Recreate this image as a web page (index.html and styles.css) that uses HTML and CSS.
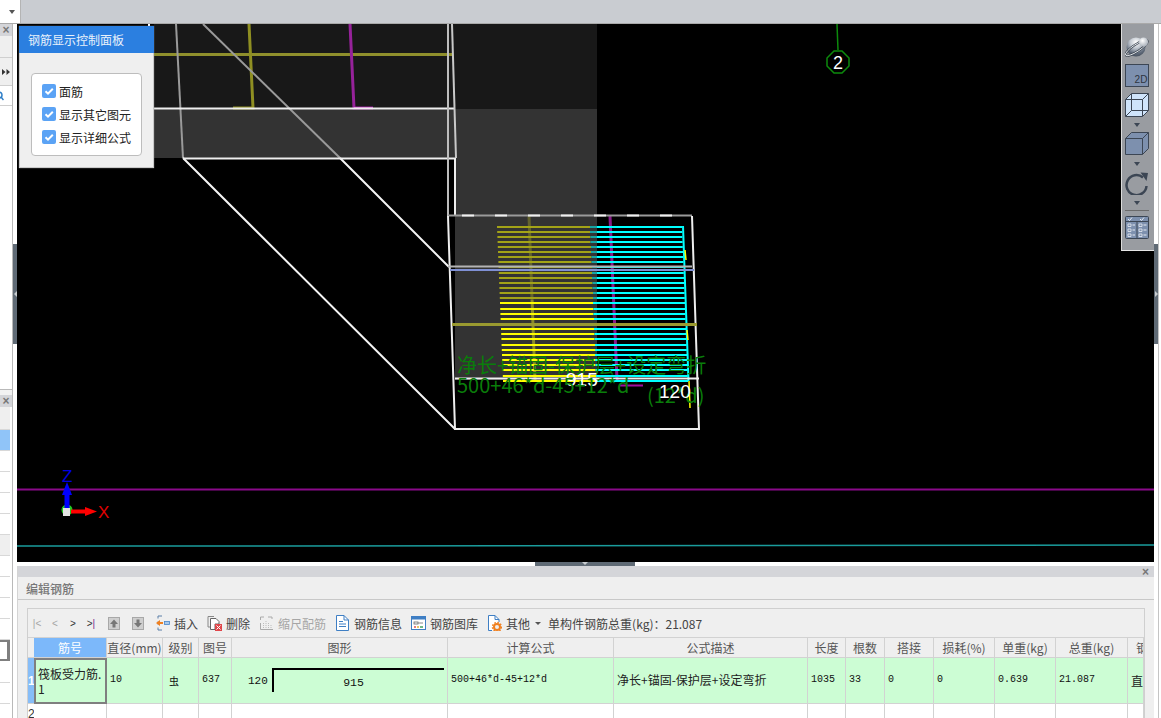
FILE: index.html
```html
<!DOCTYPE html>
<html lang="zh-CN">
<head>
<meta charset="utf-8">
<title>编辑钢筋</title>
<link rel="stylesheet" href="styles.css">
</head>
<body>
<header class="topbar">
  <div class="combo"><span class="caret"></span></div>
</header>
<div class="main">
  <aside class="side">
    <div class="side-head"><span class="close">×</span></div>
    <div class="side-row grey h22"></div>
    <div class="side-row grey h28">
      <svg class="more" width="8" height="6" viewBox="0 0 8 6"><path d="M0 0L3.500 3L0 6ZM4.500 0L8 3L4.500 6Z" fill="#333"/></svg>
    </div>
    <div class="side-row h20">
      <svg class="search" width="4" height="10" viewBox="0 0 4 10"><circle cx="-1" cy="4" r="3" fill="none" stroke="#2f7fc8" stroke-width="1.5"/><path d="M1 6l2.500 3" stroke="#2f7fc8" stroke-width="1.500"/></svg>
    </div>
    <div class="side-fill"></div>
    <div class="side-gap"></div>
    <div class="side-head"><span class="close">×</span></div>
    <div class="side-list">
      <div class="item grey h23"></div>
      <div class="item selected h21"></div>
      <div class="item h21"></div>
      <div class="item h21"></div>
      <div class="item h21"></div>
      <div class="item h21"></div>
      <div class="item grey h21"></div>
      <div class="item h21"></div>
      <div class="item h21"></div>
      <div class="item h21"></div>
      <div class="item h21"></div>
      <div class="item boxed h21"></div>
      <div class="item h22"></div>
      <div class="item h21"></div>
      <div class="item h15"></div>
    </div>
  </aside>
  <div class="split"><div class="handle"><span class="arrow-left"></span></div></div>
  <div class="center">
    <section class="viewport">
      <svg class="cad" width="1137" height="538" viewBox="17 24 1137 538">
        <rect x="154" y="24" width="443" height="85" fill="#181818"/>
        <rect x="154" y="109" width="443" height="49" fill="#333"/>
        <rect x="455" y="158" width="142" height="222" fill="#333"/>
        <path d="M149 24V26" stroke="#fff" stroke-width="2" fill="none"/>

        <path d="M154 54.500H452" stroke="#8f8f2c" stroke-width="3" fill="none"/>
        <path d="M249 24L253 108H233" stroke="#8f8f22" stroke-width="3" fill="none"/>
        <path d="M233 108.500H253" stroke="#efefc8" stroke-width="1" fill="none"/>
        <path d="M350 24L354 108H373" stroke="#96229a" stroke-width="3" fill="none"/>
        <path d="M354 108H373" stroke="#e060e0" stroke-width="1.500" fill="none"/>
        <path d="M176 24L183 158" stroke="#9a9a9a" stroke-width="2" fill="none"/>
        <path d="M203 24L340 158" stroke="#9a9a9a" stroke-width="2" fill="none"/>
        <path d="M340 158L449 267M183 158L455 429" stroke="#f4f4f4" stroke-width="2" fill="none"/>
        <path d="M154 108.500H455M183 158.500H455" stroke="#eee" stroke-width="2" fill="none"/>
        <path d="M448 24V216" stroke="#bdbdbd" stroke-width="2" fill="none"/>
        <path d="M452 24L456 158" stroke="#c8c8c8" stroke-width="2" fill="none"/>
        <path d="M455 158V216" stroke="#eee" stroke-width="2" fill="none"/>

        <path d="M529 216L535 380" stroke="#8a8a2a" stroke-width="3" fill="none"/>
        <path d="M610 216L617 380" stroke="#8a1a8a" stroke-width="3" fill="none"/>

        <path class="rebar-y" d="M497 227H590M497.200 232H590M497.400 237H590.500M497.600 242H590.500M497.800 247H591M498 252H591M498.200 257H591.500M498.400 262H591.500M498.600 267H592M498.800 273H592M499 278H592M499.200 283H592.500M499.400 288H592.500M499.600 293H593M499.800 298H593M500 303H593M500.200 309H593.500M500.400 314H593.500M500.600 319H594M500.800 324H594M501 329H594M501.200 334H594.500M501.400 339H594.500M501.600 345H595M501.800 350H595M502 355H595M502.200 360H595M502.400 365H595.500M502.600 370H595.500M502.800 376H596M503 381H596"/>
        <path class="rebar-c" d="M590 227H682M590 232H682.200M590.500 237H682.400M590.500 242H682.600M591 247H682.800M591 252H683M591.500 257H683.200M591.500 262H683.400M592 267H683.600M592 273H683.800M592 278H684M592.500 283H684.200M592.500 288H684.400M593 293H684.600M593 298H684.800M593 303H685M593.500 309H685.200M593.500 314H685.400M594 319H685.600M594 324H685.800M594 329H686M594.500 334H686.200M594.500 339H686.400M595 345H686.600M595 350H686.800M595 355H687M595 360H687.200M595.500 365H687.400M595.500 370H687.600M596 376H687.800M596 381H688"/>
        <path class="rebar-c" d="M683 226L688.500 381"/>
        <rect class="dim" x="455" y="216" width="142" height="84"/>
        <path d="M685 250L686 260M687 330L688 340M689 381L690 408" stroke="#ffff00" stroke-width="1.500" fill="none"/>
        <path d="M620 385.500H643" stroke="#a010a0" stroke-width="2" fill="none"/>

        <path d="M448 215.500H692" stroke="#9a9a9a" stroke-width="2" fill="none"/>
        <path d="M462 215.500H692" stroke="#f0f0f0" stroke-width="2" stroke-dasharray="12 21" fill="none"/>
        <path d="M692 216L699 429H455L448 216" stroke="#eee" stroke-width="2" fill="none"/>
        <path d="M448 266.500H692" stroke="#b4b4b4" stroke-width="2" fill="none"/>
        <path d="M450 270H694" stroke="#7f90d4" stroke-width="2" fill="none"/>
        <path d="M452 324.500H697" stroke="#9a9a30" stroke-width="3" fill="none"/>
        <path d="M455 378.500H699" stroke="#f0f0f0" stroke-width="2" fill="none"/>

        <text class="cad-green" x="457" y="373">净长+锚固-保护层+设定弯折</text>
        <text class="cad-white" x="566" y="386">915</text>
        <text class="cad-green" x="457" y="393">500+46*d-45+12*d</text>
        <text class="cad-green" x="647" y="403">(12*d)</text>
        <text class="cad-white" x="659" y="398">120</text>

        <path d="M837 24L838 50" stroke="#0c8a0c" stroke-width="1.500" fill="none"/>
        <polygon points="834,51 842,51 849,58 849,66 842,73 834,73 827,66 827,58" fill="#000" stroke="#0c8a0c" stroke-width="1.500"/>
        <text class="grid-num" x="838" y="69">2</text>

        <path d="M17 489.500H1154" stroke="#8a0a8a" stroke-width="2" fill="none"/>
        <path d="M17 546H280L1154 545" stroke="#1a9c9c" stroke-width="1.500" fill="none"/>

        <circle cx="67" cy="510" r="5.500" fill="#22cc22"/>
        <path d="M67 508V492" stroke="#0000ff" stroke-width="5" fill="none"/>
        <polygon points="67,482 62,495 72,495" fill="#0000ff"/>
        <path d="M71 511.500H86" stroke="#ff0000" stroke-width="4" fill="none"/>
        <polygon points="97,511.500 85,507 85,516" fill="#ff0000"/>
        <rect x="63" y="508" width="7" height="8" fill="#e4e4e4"/>
        <text class="axis-z" x="62" y="482">Z</text>
        <text class="axis-x" x="98" y="518">X</text>
      </svg>

      <div class="control">
        <div class="control-title">钢筋显示控制面板</div>
        <div class="control-body">
          <div class="control-box">
            <label class="check"><span class="tick"><svg width="14" height="14" viewBox="0 0 14 14"><path d="M3.500 7.200L6 9.600L10.800 4.800" fill="none" stroke="#fff" stroke-width="2"/></svg></span>面筋</label>
            <label class="check"><span class="tick"><svg width="14" height="14" viewBox="0 0 14 14"><path d="M3.500 7.200L6 9.600L10.800 4.800" fill="none" stroke="#fff" stroke-width="2"/></svg></span>显示其它图元</label>
            <label class="check"><span class="tick"><svg width="14" height="14" viewBox="0 0 14 14"><path d="M3.500 7.200L6 9.600L10.800 4.800" fill="none" stroke="#fff" stroke-width="2"/></svg></span>显示详细公式</label>
          </div>
        </div>
      </div>

      <nav class="vtools">
        <svg class="vi-sphere" width="24" height="20" viewBox="0 0 24 20">
          <defs>
            <radialGradient id="ball" cx=".5" cy=".25" r=".85"><stop offset="0" stop-color="#fff"/><stop offset=".35" stop-color="#c4cad2"/><stop offset=".7" stop-color="#5f6a7a"/><stop offset="1" stop-color="#39424e"/></radialGradient>
            <radialGradient id="knob" cx=".4" cy=".35" r=".7"><stop offset="0" stop-color="#fff"/><stop offset="1" stop-color="#a4acb6"/></radialGradient>
          </defs>
          <circle cx="11" cy="10" r="9.500" fill="url(#ball)"/>
          <ellipse cx="11.500" cy="11" rx="13" ry="3.500" transform="rotate(-33 11.500 11)" fill="none" stroke="#39424e" stroke-width="2.200"/>
          <ellipse cx="11.500" cy="11" rx="13" ry="3.500" transform="rotate(-33 11.500 11)" fill="none" stroke="#e4e8ec" stroke-width=".9"/>
          <circle cx="18.500" cy="5" r="4.500" fill="url(#knob)"/>
        </svg>
        <svg class="vi-2d" width="24" height="23" viewBox="0 0 24 23">
          <rect x=".5" y=".5" width="23" height="22" fill="#7d90ae" stroke="#3c4654"/>
          <text class="two-d" x="16" y="19">2D</text>
        </svg>
        <svg class="vi-cube" width="24" height="24" viewBox="0 0 24 24">
          <path d="M.5 6.500L6.500.5H23.500V17.500L17.500 23.500H.5Z" fill="#cfe4fb" stroke="#3c4654"/>
          <path d="M.5 6.500H17.500V23.500M17.500 6.500L23.500.5M6.500.5V17.500H23.500M6.500 17.500L.5 23.500" fill="none" stroke="#3c4654"/>
        </svg>
        <span class="vcaret"></span>
        <svg class="vi-solid" width="24" height="23" viewBox="0 0 24 23">
          <path d="M.5 6.500L6.500.5H23.500V16.500L17.500 22.500H.5Z" fill="#7d90ae" stroke="#3c4654"/>
          <path d="M.5 6.500H17.500V22.500M17.500 6.500L23.500.5" fill="none" stroke="#3c4654"/>
        </svg>
        <span class="vcaret tall"></span>
        <svg class="vi-rot" width="24" height="23" viewBox="0 0 24 23">
          <path d="M18 5.500A10 10 0 1 0 21.500 14" fill="none" stroke="#3c4654" stroke-width="2.500"/>
          <path d="M15.500 0.500L23 1L21.500 9Z" fill="#3c4654"/>
        </svg>
        <span class="vcaret"></span>
        <span class="vline"></span>
        <svg class="vi-grid" width="24" height="23" viewBox="0 0 24 23">
          <rect x=".5" y=".5" width="23" height="22" rx="1" fill="#7d90ae" stroke="#3c4654"/>
          <path d="M.5 5.500H23.500M12 5.500V22.500" stroke="#3c4654" fill="none"/>
          <path d="M3 3l1.500 1.500L7 1.500M15 3l1.500 1.500L19 1.500" stroke="#e8ecf2" fill="none"/>
          <path d="M3 8h3v2.500H3zM3 13h3v2.500H3zM3 18h3v2.500H3zM14 8h3v2.500h-3zM14 13h3v2.500h-3zM14 18h3v2.500h-3z" fill="none" stroke="#e8ecf2" stroke-width=".8"/>
          <path d="M7.500 9h2.500M7.500 14h2.500M7.500 19h2.500M18.500 9h3M18.500 14h3M18.500 19h3" stroke="#e8ecf2"/>
        </svg>
      </nav>
    </section>
    <div class="hsplit"><div class="hhandle"><span class="arrow-down"></span></div></div>
    <section class="panel">
      <div class="panel-head"><span class="close">×</span></div>
      <div class="panel-title">编辑钢筋</div>
      <div class="sheet">
        <div class="toolbar">
          <span class="nav off">|&lt;</span>
          <span class="nav off">&lt;</span>
          <span class="nav">&gt;</span>
          <span class="nav">&gt;<i class="bar">|</i></span>
          <svg class="move up" width="12" height="13" viewBox="0 0 12 13"><rect x=".5" y=".5" width="11" height="12" fill="#cfcfcf" stroke="#a8a8a8"/><path d="M6 2.500L10 7H7.500V10.500H4.500V7H2Z" fill="#777"/></svg>
          <svg class="move down" width="12" height="13" viewBox="0 0 12 13"><rect x=".5" y=".5" width="11" height="12" fill="#cfcfcf" stroke="#a8a8a8"/><path d="M6 10.500L10 6H7.500V2.500H4.500V6H2Z" fill="#777"/></svg>
          <span class="tool">
            <svg width="15" height="16" viewBox="0 0 15 16"><path d="M7 1H3V3.500M3 6.500V9.500M3 12.500V15H7" fill="none" stroke="#5b7fa8"/><path d="M1 8L5 5V7H8V9H5V11Z" fill="#f08020"/><rect x="9.500" y="6.500" width="5" height="3" fill="#a9c9ea" stroke="#4a86c8" stroke-width=".8"/></svg>
            插入
          </span>
          <span class="tool">
            <svg width="15" height="16" viewBox="0 0 15 16"><path d="M1 1.500H7M1 1.500V12H4" fill="none" stroke="#888"/><path d="M3.500 3.500H9L12 6.500V9H8V14.500H3.500Z" fill="#fff" stroke="#666"/><rect x="8" y="9" width="7" height="7" fill="#e0464a"/><path d="M9.500 10.500L13.500 14.500M13.500 10.500L9.500 14.500" stroke="#fff"/></svg>
            删除
          </span>
          <span class="tool off">
            <svg width="15" height="16" viewBox="0 0 15 16"><path d="M1.500 2H5M1.500 2V5M1.500 8V14.500H14M9 2H13M13 2V4" fill="none" stroke="#aaa"/><path d="M4.500 8V14M7 6V14M9.500 8V14M12 10V14" stroke="#bbb" stroke-dasharray="1 1"/></svg>
            缩尺配筋
          </span>
          <span class="tool">
            <svg width="15" height="16" viewBox="0 0 15 16"><path d="M1.500 .5H9L13.500 5V15.500H1.500Z" fill="#fff" stroke="#3f7fc4"/><path d="M9 .5V5H13.500M4 6.500H8M4 9H11M4 11.500H11" fill="none" stroke="#3f7fc4"/></svg>
            钢筋信息
          </span>
          <span class="tool">
            <svg width="15" height="16" viewBox="0 0 15 16"><rect x=".5" y="1.500" width="14" height="13" fill="#fff" stroke="#3f7fc4"/><rect x=".5" y="1.500" width="14" height="3" fill="#3f7fc4"/><rect x="3" y="7" width="4" height="2" fill="none" stroke="#666" stroke-width=".8"/><path d="M7 8H12" stroke="#888"/><path d="M3 12H5" stroke="#e05050" stroke-width="1.500"/><path d="M6 12H8" stroke="#e0b030" stroke-width="1.500"/><path d="M9 12H12" stroke="#40a060" stroke-width="1.500"/></svg>
            钢筋图库
          </span>
          <span class="tool">
            <svg width="15" height="16" viewBox="0 0 15 16"><path d="M5 15.500H1.500V.5H8L12 4.500V7" fill="#fff" stroke="#3f7fc4"/><path d="M8 .5V4.500H12" fill="none" stroke="#3f7fc4"/><circle cx="10" cy="12" r="3" fill="none" stroke="#f08020" stroke-width="2"/><circle cx="10" cy="12" r="4.500" fill="none" stroke="#f08020" stroke-dasharray="1.500 1.500" stroke-width="1.500"/></svg>
            其他
          </span>
          <span class="tool-caret"></span>
          <span class="summary">单构件钢筋总重(kg)：21.087</span>
        </div>
        <table class="grid">
          <colgroup>
            <col class="c-h"><col class="c-no"><col class="c-d"><col class="c-g"><col class="c-f"><col class="c-shape"><col class="c-calc"><col class="c-desc"><col class="c-len"><col class="c-num"><col class="c-lap"><col class="c-loss"><col class="c-unit"><col class="c-total"><col class="c-end">
          </colgroup>
          <thead>
            <tr>
              <th class="rowhead"></th><th class="active">筋号</th><th>直径(mm)</th><th>级别</th><th>图号</th><th>图形</th><th>计算公式</th><th>公式描述</th><th>长度</th><th>根数</th><th>搭接</th><th>损耗(%)</th><th>单重(kg)</th><th>总重(kg)</th><th class="clip">钢筋归类</th>
            </tr>
          </thead>
          <tbody>
            <tr class="on">
              <th class="rowhead sel">1</th>
              <td class="current">筏板受力筋.<br>1</td>
              <td class="mono">10</td>
              <td class="grade">虫</td>
              <td class="mono">637</td>
              <td class="shape-cell">
                <div class="shape"><span class="dim-a">120</span><span class="leg">915</span></div>
              </td>
              <td class="mono">500+46*d-45+12*d</td>
              <td class="desc">净长+锚固-保护层+设定弯折</td>
              <td class="mono">1035</td>
              <td class="mono">33</td>
              <td class="mono">0</td>
              <td class="mono">0</td>
              <td class="mono">0.639</td>
              <td class="mono">21.087</td>
              <td class="clip-cell">直筋</td>
            </tr>
            <tr class="blank">
              <th class="rowhead">2</th>
              <td></td><td></td><td></td><td></td><td></td><td></td><td></td><td></td><td></td><td></td><td></td><td></td><td></td><td></td>
            </tr>
          </tbody>
        </table>
      </div>
    </section>
  </div>
  <div class="split right"><div class="handle"><span class="arrow-right"></span></div></div>
  <div class="edge"></div>
</div>
</body>
</html>
```

FILE: styles.css
```css
* { box-sizing: border-box; }
html, body { margin: 0; height: 718px; overflow: hidden; background: #fff; }
body {
  display: flex;
  flex-direction: column;
  font: 12px "Noto Sans CJK SC", "Liberation Sans", sans-serif;
  color: #333;
}

/* top */
.topbar { height: 24px; flex: none; background: #c9ccd1; border-bottom: 1px solid #a9a9a9; }
.combo { position: relative; width: 21px; height: 23px; background: #fff; border-right: 1px solid #b4b4b4; display: flex; justify-content: flex-end; align-items: center; padding-right: 5px; }
.caret { border: 3px solid transparent; border-top: 4px solid #555; border-bottom: 0; }

.main { flex: 1; display: flex; min-height: 0; }

/* left */
.side { width: 13px; flex: none; display: flex; flex-direction: column; border-right: 1px solid #b9b9b9; overflow: hidden; }
.side-head { height: 12px; flex: none; background: #d4d5d9; display: flex; align-items: center; justify-content: center; }
.close { font: bold 12px/10px "Liberation Sans", sans-serif; color: #777; }
.side-row { flex: none; border-bottom: 1px solid #cfcfcf; display: flex; align-items: center; }
.side-row.grey { background: #efefef; }
.h15 { height: 15px; } .h20 { height: 20px; } .h21 { height: 21px; } .h22 { height: 22px; } .h23 { height: 23px; } .h28 { height: 28px; }
.more { display: block; margin-left: 2px; }
.search { display: block; }
.side-fill { height: 284px; flex: none; border-bottom: 1px solid #b9b9b9; }
.side-gap { height: 5px; flex: none; background: #f2f2f2; }
.side-list { flex: 1; }
.item { width: 10px; border-bottom: 1px solid #d8d8d8; }
.item.grey { background: #efefef; }
.item.selected { background: #90c4f8; }
.item.boxed { border: 2px solid #7f7f7f; border-left: 0; border-right-width: 3px; }

/* splitters */
.split { width: 4px; flex: none; padding-top: 220px; background: #fff; }
.handle { height: 100px; background: #5f6a75; display: flex; align-items: center; justify-content: center; }
.arrow-left { border: 3px solid transparent; border-right: 3px solid #c8ccd0; border-left: 0; }
.arrow-right { border: 3px solid transparent; border-left: 3px solid #c8ccd0; border-right: 0; }
.edge { flex: 1; border-left: 1px solid #c4c4c4; background: #fff; }

.center { width: 1137px; flex: none; display: flex; flex-direction: column; }

/* viewport */
.viewport { position: relative; height: 538px; flex: none; background: #000; overflow: hidden; }
.cad { display: block; }
.rebar-y { fill: none; stroke: #ffff00; stroke-width: 2; }
.rebar-c { fill: none; stroke: #00ffff; stroke-width: 2; }
.dim { fill: #333; fill-opacity: .45; }
.cad-green { font: 20px "Noto Sans CJK SC", "Liberation Sans", sans-serif; fill: #0a7d0a; }
.cad-white { font: 19px "Liberation Sans", sans-serif; fill: #fff; }
.grid-num { font: 18px "Liberation Sans", sans-serif; fill: #fff; text-anchor: middle; }
.axis-z { font: 17px "Liberation Sans", sans-serif; fill: #0000e0; }
.axis-x { font: 17px "Liberation Sans", sans-serif; fill: #e00000; }

/* control panel */
.control { position: absolute; left: 2px; top: 2px; width: 135px; height: 142px; background: #efefef; border: 1px solid #c9c9c9; border-top: 0; box-shadow: 0 0 1px #999; }
.control-title { height: 27px; margin: 0 -1px; background: #2b7fe0; color: #e8f1fb; padding-left: 9px; font-size: 12px; line-height: 27px; }
.control-body { padding: 20px 11px 0 11px; }
.control-box { height: 83px; background: #fff; border: 1px solid #bdbdbd; border-radius: 4px; padding: 10px 0 0 10px; display: flex; flex-direction: column; gap: 9px; }
.check { display: flex; align-items: center; height: 14px; gap: 3px; color: #222; font-size: 12px; white-space: nowrap; }
.tick { width: 14px; height: 14px; border-radius: 2px; background: #5ba3f5; flex: none; }
.tick svg { display: block; }

/* right tools */
.vtools { position: absolute; right: 0; top: 0; width: 33px; height: 227px; background: #999ca1; border-left: 1px solid #dcdcdc; border-bottom: 1px solid #e6e6e6; padding: 13px 0 0 3px; display: flex; flex-direction: column; }
.vtools svg { display: block; flex: none; }
.vi-2d { margin-top: 7px; }
.vi-cube { margin-top: 6px; }
.two-d { font: 10px "Liberation Sans", sans-serif; fill: #2d3540; text-anchor: middle; }
.vcaret { height: 15px; flex: none; width: 24px; display: flex; align-items: center; justify-content: center; }
.vcaret::before { content: ""; border: 3px solid transparent; border-top: 4px solid #3c4654; border-bottom: 0; }
.vcaret.tall { height: 17px; }
.vline { height: 1px; width: 24px; background: #6a6a6a; flex: none; margin-bottom: 5px; }

/* horizontal splitter */
.hsplit { height: 4px; flex: none; background: #fff; display: flex; justify-content: center; }
.hhandle { width: 100px; height: 4px; margin-left: -1px; background: #5f6a75; display: flex; justify-content: center; }
.arrow-down { border: 3px solid transparent; border-top: 3px solid #c8ccd0; border-bottom: 0; }

/* bottom panel */
.panel { flex: 1; background: #efefef; border-left: 1px solid #d4d4d4; min-height: 0; overflow: hidden; }
.panel-head { height: 11px; background: #d4d5d9; display: flex; justify-content: flex-end; align-items: center; padding-right: 5px; }
.panel-title { height: 23px; border-bottom: 1px solid #c8c8c8; color: #777; padding-left: 8px; font-size: 12px; line-height: 23px; font-weight: 500; }
.sheet { margin: 8px 9px 0 9px; border: 1px solid #cfcfcf; border-bottom: 0; height: 120px; background: #efefef; overflow: hidden; }

.toolbar { height: 28px; display: flex; align-items: center; color: #444; white-space: nowrap; }
.nav { width: 18px; text-align: center; font: 10px "Liberation Sans", sans-serif; color: #333; flex: none; }
.nav.off { color: #a6a6a6; }
.bar { font-style: normal; color: #7a2a8a; }
.move { flex: none; }
.move.up { margin-left: 8px; }
.move.down { margin-left: 12px; }
.tool { display: flex; align-items: center; gap: 4px; margin-left: 11px; margin-right: -2px; }
.tool svg { flex: none; }
.tool.off { color: #a6a6a6; }
.tool-caret { margin-left: 7px; border: 3px solid transparent; border-top: 3px solid #555; border-bottom: 0; }
.summary { margin-left: 7px; color: #444; }

.grid { table-layout: fixed; width: 1116px; border-collapse: separate; border-spacing: 0; }
.c-h { width: 6px; } .c-no { width: 73px; } .c-d { width: 56px; } .c-g { width: 36px; } .c-f { width: 33px; }
.c-shape { width: 216px; } .c-calc { width: 166px; } .c-desc { width: 194px; } .c-len { width: 38px; } .c-num { width: 39px; }
.c-lap { width: 49px; } .c-loss { width: 61px; } .c-unit { width: 61px; } .c-total { width: 72px; } .c-end { width: 16px; }

.grid th, .grid td { padding: 0; border-right: 1px solid #d2d2d2; border-bottom: 1px solid #d2d2d2; overflow: hidden; white-space: nowrap; }
.grid thead th { height: 21px; background: #efefef; font-weight: 400; color: #555; text-align: center; border-top: 1px solid #d2d2d2; }
.grid thead th.active { background: #7cb8fa; color: #fff; }
.grid thead th.rowhead { background: #efefef; }
.grid th.clip { text-align: left; padding-left: 8px; }
.on td { height: 46px; background: #ccfdd4; padding: 0 3px; vertical-align: middle; color: #222; }
.grid .rowhead { font: 400 12px "Liberation Sans", sans-serif; color: #333; border-right: 0; }
.grid .rowhead.sel { background: #86bdf8; color: #fff; font-weight: 700; }
.blank td, .blank th { height: 20px; background: #fff; }
.grid td.current { padding: 0 2px; border: 2px solid #7f7f7f; line-height: 15px; color: #222; white-space: nowrap; }
.grid td.mono { font: 10px "Liberation Mono", monospace; color: #111; padding-left: 3px; padding-bottom: 3px; }
.grid td.grade { font-size: 10px; color: #111; padding-left: 6px; }
.grid td.desc { font-size: 12px; color: #222; padding-left: 3px; padding-bottom: 3px; }
.grid td.clip-cell { font-size: 12px; padding-left: 3px; color: #222; }
.grid td.shape-cell { padding: 0; }
.shape { display: flex; align-items: flex-start; padding: 0 0 0 16px; }
.dim-a { width: 24px; font: 11px/24px "Liberation Mono", monospace; color: #111; margin-top: 1px; }
.leg { width: 172px; height: 24px; border-left: 2px solid #000; border-top: 2px solid #000; text-align: center; font: 11.500px/22px "Liberation Mono", monospace; color: #111; padding: 2px 11px 0 0; }
```
